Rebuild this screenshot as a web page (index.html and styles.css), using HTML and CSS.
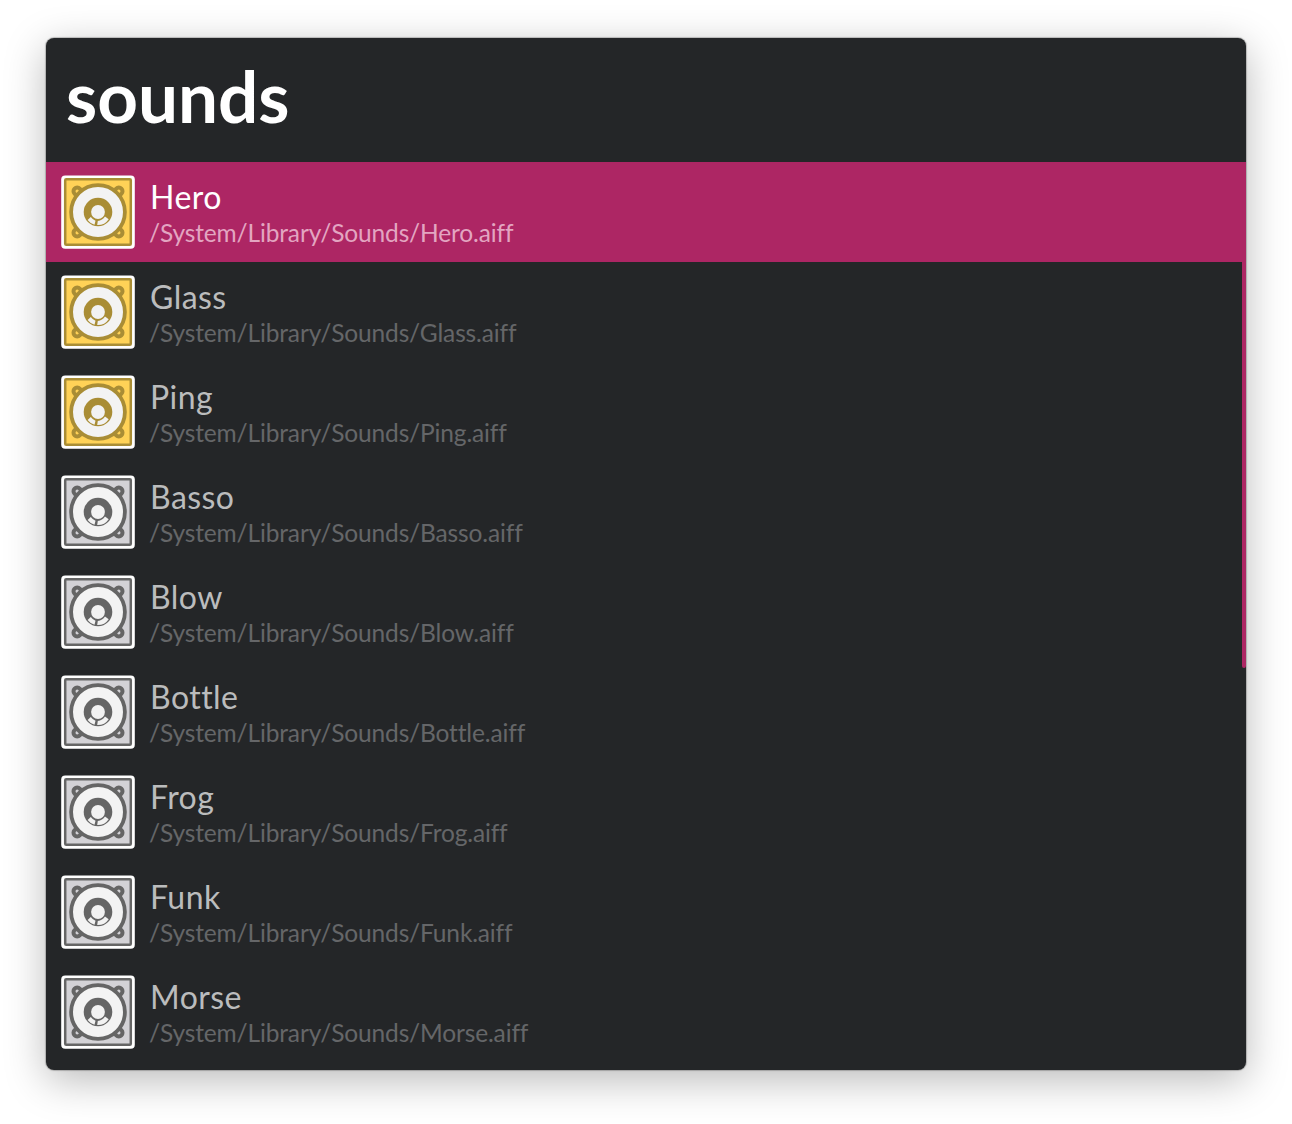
FILE: index.html
```
<!DOCTYPE html>
<html lang="en">
<head>
<meta charset="utf-8">
<title>sounds</title>
<link rel="stylesheet" href="styles.css">
</head>
<body>
<svg class="sprite" aria-hidden="true">
  <symbol id="speaker" viewBox="0 0 84 84">
    <rect x="5.2" y="5.4" width="73.6" height="73.4" rx="4" fill="#fff"/>
    <rect class="panel" x="9.2" y="9.2" width="65.6" height="65.6" rx="1"/>
    <g class="screws">
      <circle cx="21.2" cy="21.2" r="3.7"/><circle cx="62.8" cy="21.2" r="3.7"/>
      <circle cx="21.2" cy="62.7" r="3.7"/><circle cx="62.8" cy="62.7" r="3.7"/>
    </g>
    <circle class="cone" cx="42" cy="42" r="26.9"/>
    <circle class="core" cx="42" cy="42" r="14.3"/>
    <path d="M34.8 47.1A9.5 9.5 0 0 0 39.5 50.7L38.5 54.8A13.2 13.2 0 0 1 31.6 50ZM41.8 51A9.5 9.5 0 0 0 49 46.6L52.7 49.2A13.2 13.2 0 0 1 41.2 55.1Z" fill="#f2f2f2"/>
    <circle cx="42" cy="42" r="6.9" fill="#f2f2f2"/>
  </symbol>
</svg>
<main class="window">
  <header class="search">sounds</header>
  <ul class="results">
    <li class="row selected gold"><svg class="icon"><use href="#speaker"/></svg><div class="text"><div class="name">Hero</div><div class="path">/System/Library/Sounds/Hero.aiff</div></div></li>
    <li class="row gold"><svg class="icon"><use href="#speaker"/></svg><div class="text"><div class="name">Glass</div><div class="path">/System/Library/Sounds/Glass.aiff</div></div></li>
    <li class="row gold"><svg class="icon"><use href="#speaker"/></svg><div class="text"><div class="name">Ping</div><div class="path">/System/Library/Sounds/Ping.aiff</div></div></li>
    <li class="row"><svg class="icon"><use href="#speaker"/></svg><div class="text"><div class="name">Basso</div><div class="path">/System/Library/Sounds/Basso.aiff</div></div></li>
    <li class="row"><svg class="icon"><use href="#speaker"/></svg><div class="text"><div class="name">Blow</div><div class="path">/System/Library/Sounds/Blow.aiff</div></div></li>
    <li class="row"><svg class="icon"><use href="#speaker"/></svg><div class="text"><div class="name">Bottle</div><div class="path">/System/Library/Sounds/Bottle.aiff</div></div></li>
    <li class="row"><svg class="icon"><use href="#speaker"/></svg><div class="text"><div class="name">Frog</div><div class="path">/System/Library/Sounds/Frog.aiff</div></div></li>
    <li class="row"><svg class="icon"><use href="#speaker"/></svg><div class="text"><div class="name">Funk</div><div class="path">/System/Library/Sounds/Funk.aiff</div></div></li>
    <li class="row"><svg class="icon"><use href="#speaker"/></svg><div class="text"><div class="name">Morse</div><div class="path">/System/Library/Sounds/Morse.aiff</div></div></li>
  </ul>
  <div class="scrollbar"></div>
</main>
</body>
</html>
```
FILE: styles.css
```
* { box-sizing: border-box; }
body {
  margin: 0;
  height: 1124px;
  padding: 38px 46px 54px;
  background: #fff;
  overflow: hidden;
  font-family: Lato, "Liberation Sans", sans-serif;
}
.sprite { position: absolute; width: 0; height: 0; }
.window {
  position: relative;
  height: 1032px;
  border-radius: 8px;
  background: #242628;
  box-shadow: 0 0 1px 1px rgba(0, 0, 0, .22), 0 10px 42px rgba(0, 0, 0, .28);
}
.search {
  height: 124px;
  padding-left: 20px;
  line-height: 116px;
  font-size: 71px;
  font-weight: 700;
  color: #fff;
}
.results { margin: 0; padding: 0; list-style: none; }
.row {
  --panel: #d3d2d6;
  --line: #656565;
  display: flex;
  align-items: center;
  height: 100px;
  padding-left: 10px;
  color: #bbbcbd;
}
.gold { --panel: #ffd257; --line: #a98d35; }
.selected { background: #ad2664; color: #fff; }
.icon { width: 84px; height: 84px; flex: none; }
.panel { fill: var(--panel); stroke: var(--line); stroke-width: 2.5; }
.screws { fill: var(--panel); stroke: var(--line); stroke-width: 4; }
.cone { fill: #f3f3f3; stroke: var(--line); stroke-width: 3.8; }
.core { fill: var(--line); }
.text { padding: 3px 0 0 10px; white-space: nowrap; }
.name { height: 38px; line-height: 38px; font-size: 32px; letter-spacing: .45px; }
.path { height: 34px; margin-left: -1px; line-height: 34px; font-size: 24.5px; letter-spacing: -.14px; color: #656668; }
.selected .path { color: #e3a5c1; }
.scrollbar {
  position: absolute;
  top: 224px;
  right: 0;
  width: 4px;
  height: 406px;
  border-radius: 0 0 2px 2px;
  background: #ad2664;
}
```
